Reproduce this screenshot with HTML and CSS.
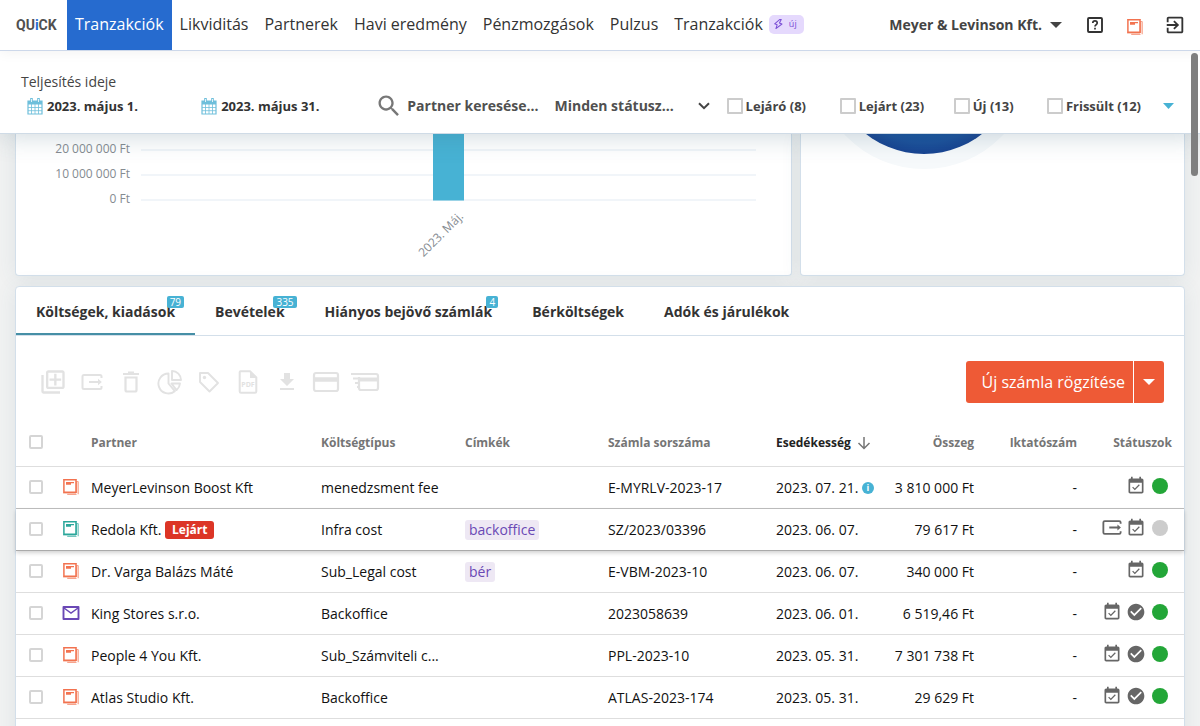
FILE: index.html
```html
<!DOCTYPE html>
<html lang="hu">
<head>
<meta charset="utf-8">
<meta name="viewport" content="width=device-width, initial-scale=1">
<title>QUiCK – Tranzakciók</title>
<link rel="stylesheet" href="styles.css">
</head>
<body>
<svg class="sprite" aria-hidden="true">
  <symbol id="doc" viewBox="0 0 16 16">
    <path d="M3 13.500h10.500V2.500h2M13.500 15.300H4.200M15.200 3v12.200" fill="none" stroke="currentColor" stroke-width="1.200" opacity=".65"/>
    <path d="M.9 .8H13v12.500H.9z" fill="none" stroke="currentColor" stroke-width="1.500"/>
    <path d="M.4 13.200v1.200H13M0 .3h14" fill="none" stroke="currentColor" stroke-width=".8" opacity=".5"/>
    <path d="M3 3.600h8M3 5h5" stroke="currentColor" stroke-width="1.300"/>
  </symbol>
  <symbol id="mail" viewBox="0 0 18 16">
    <path d="M1.500 2h15v12h-15z" fill="none" stroke="currentColor" stroke-width="1.900" stroke-linejoin="round"/>
    <path d="M2 3l7 5 7-5" fill="none" stroke="currentColor" stroke-width="1.500"/>
  </symbol>
  <symbol id="event" viewBox="0 0 24 24"><path fill="currentColor" d="M16.530 11.060L15.470 10l-4.880 4.880-2.120-2.120-1.060 1.060L10.590 17l5.940-5.940zM19 3h-1V1h-2v2H8V1H6v2H5c-1.110 0-2 .9-2 2v14c0 1.100.89 2 2 2h14c1.100 0 2-.9 2-2V5c0-1.100-.9-2-2-2zm0 16H5V8h14v11z"/></symbol>
  <symbol id="check" viewBox="0 0 24 24"><path fill="currentColor" d="M12 2C6.480 2 2 6.480 2 12s4.480 10 10 10 10-4.480 10-10S17.520 2 12 2zm-2 15l-5-5 1.410-1.410L10 14.170l7.590-7.590L19 8l-9 9z"/></symbol>
  <symbol id="dot" viewBox="0 0 24 24"><circle cx="12" cy="12" r="9.600" fill="currentColor"/></symbol>
  <symbol id="send" viewBox="0 0 22 18"><path d="M20.500 5V3.500q0-1.500-1.500-1.500H3q-1.500 0-1.500 1.500v11Q1.500 16 3 16h16q1.500 0 1.500-1.500V13M8 9h10" fill="none" stroke="currentColor" stroke-width="2"/><path d="M17 5.800L20.800 9 17 12.200z" fill="currentColor"/></symbol>
  <symbol id="calendar" viewBox="0 0 16 17"><path d="M1 3h14v13H1z" fill="#fff" stroke="currentColor" stroke-width="1.200"/><path d="M1 3h14v3.500H1z" fill="currentColor"/><path d="M4.500 6v10M8 6v10M11.500 6v10M1 9.500h14M1 12.700h14" stroke="currentColor" stroke-width=".8"/><path d="M4.500 .5v4M11.500 .5v4" stroke="currentColor" stroke-width="2.600" stroke-linecap="round"/><path d="M4.500 1v3M11.500 1v3" stroke="#fff" stroke-width=".8"/></symbol>
</svg>

<div class="app">
  <header class="topbar">
    <a class="logo" href="#">QU<span class="logo-i">i</span>CK</a>
    <nav class="nav">
      <a class="nav-link active" href="#">Tranzakciók</a>
      <a class="nav-link" href="#">Likviditás</a>
      <a class="nav-link" href="#">Partnerek</a>
      <a class="nav-link" href="#">Havi eredmény</a>
      <a class="nav-link" href="#">Pénzmozgások</a>
      <a class="nav-link" href="#">Pulzus</a>
      <a class="nav-link" href="#">Tranzakciók
        <span class="new-pill"><svg width="11" height="12" viewBox="0 0 12 12"><path d="M7.500 1L1.800 5.800l2.700 1L3.200 11l6.600-5-2.800-1L9 1z" fill="none" stroke="currentColor" stroke-width="1.100" stroke-linejoin="round"/></svg>új</span></a>
    </nav>
    <div class="account">
      <button class="company" type="button">Meyer &amp; Levinson Kft. <svg width="12" height="6" viewBox="0 0 12 6"><path d="M0 0h12L6 6z" fill="currentColor"/></svg></button>
      <button class="icon-button" type="button" aria-label="Súgó"><svg width="18" height="18" viewBox="0 0 18 18"><rect x="2" y="2" width="14" height="14" rx="1" fill="none" stroke="currentColor" stroke-width="1.900"/><path d="M6.800 7q0-2.200 2.200-2.200T11.200 7q0 1-1.100 1.700T9 10.600M9 11.700v1.700" fill="none" stroke="currentColor" stroke-width="1.700"/></svg></button>
      <button class="icon-button orange low" type="button" aria-label="Dokumentumok"><svg width="16" height="16"><use href="#doc"/></svg></button>
      <button class="icon-button" type="button" aria-label="Kilépés"><svg width="22" height="22" viewBox="0 0 24 24"><path fill="currentColor" d="M10.090 15.590L11.500 17l5-5-5-5-1.410 1.410L12.670 11H3v2h9.670l-2.580 2.590zM19 3H5c-1.110 0-2 .9-2 2v4h2V5h14v14H5v-4H3v4c0 1.100.89 2 2 2h14c1.100 0 2-.9 2-2V5c0-1.100-.9-2-2-2z"/></svg></button>
    </div>
  </header>

  <form class="filters">
    <div class="filter-title">Teljesítés ideje</div>
    <div class="filter-row">
      <button class="date" type="button"><svg width="16" height="17"><use href="#calendar"/></svg>2023. május 1.</button>
      <button class="date" type="button"><svg width="16" height="17"><use href="#calendar"/></svg>2023. május 31.</button>
      <label class="search"><svg width="28" height="28" viewBox="0 0 24 24" aria-hidden="true"><path fill="currentColor" d="M15.500 14h-.79l-.28-.27C15.410 12.590 16 11.110 16 9.500 16 5.910 13.090 3 9.500 3S3 5.910 3 9.500 5.910 16 9.500 16c1.610 0 3.090-.59 4.230-1.570l.27.28v.79l5 4.990L20.490 19l-4.990-5zm-6 0C7.010 14 5 11.990 5 9.500S7.010 5 9.500 5 14 7.010 14 9.500 11.990 14 9.500 14z"/></svg><input type="text" placeholder="Partner keresése..." aria-label="Partner keresése"></label>
      <div class="status-filter"><select aria-label="Státusz"><option>Minden státusz...</option></select><svg width="12" height="8" viewBox="0 0 12 8" aria-hidden="true"><path d="M1 1.200l5 5 5-5" fill="none" stroke="currentColor" stroke-width="2"/></svg></div>
      <label class="tick"><input type="checkbox">Lejáró (8)</label>
      <label class="tick"><input type="checkbox">Lejárt (23)</label>
      <label class="tick"><input type="checkbox">Új (13)</label>
      <label class="tick"><input type="checkbox">Frissült (12)</label>
      <button class="more" type="button" aria-label="További szűrők"><svg width="11" height="6" viewBox="0 0 11 6"><path d="M0 0h11L5.500 6z" fill="currentColor"/></svg></button>
    </div>
  </form>

  <main class="content">
    <div class="charts">
      <section class="card chart">
        <svg viewBox="0 0 775 141" role="img" aria-label="Havi összegek">
          <path d="M125 16H740M125 41H740M125 66H740" stroke="#f1f5f9" stroke-width="2"/>
          <rect x="417" y="-10" width="31" height="76.500" fill="#47b2d4"/>
          <g class="axis" text-anchor="end">
            <text x="114" y="19">20 000 000 Ft</text>
            <text x="114" y="44">10 000 000 Ft</text>
            <text x="114" y="69">0 Ft</text>
            <text transform="translate(448 83) rotate(-45)">2023. Máj.</text>
          </g>
        </svg>
      </section>
      <section class="card chart">
        <svg viewBox="0 0 383 141" role="img" aria-label="Megoszlás">
          <defs><radialGradient id="pie"><stop offset=".6" stop-color="#0e57a0"/><stop offset=".88" stop-color="#1a509b"/><stop offset="1" stop-color="#174391"/></radialGradient></defs>
          <circle cx="123" cy="-74" r="109" fill="#f6f9fb"/>
          <circle cx="123" cy="-74" r="94" fill="url(#pie)"/>
        </svg>
      </section>
    </div>

    <section class="card list">
      <div class="tabs" role="tablist">
        <button class="tab selected" type="button" role="tab"><span class="tab-text">Költségek, kiadások<span class="count">79</span></span></button>
        <button class="tab" type="button" role="tab"><span class="tab-text">Bevételek<span class="count wide">335</span></span></button>
        <button class="tab" type="button" role="tab"><span class="tab-text">Hiányos bejövő számlák<span class="count narrow">4</span></span></button>
        <button class="tab" type="button" role="tab">Bérköltségek</button>
        <button class="tab" type="button" role="tab">Adók és járulékok</button>
      </div>

      <div class="toolbar">
        <div class="tools">
          <button type="button" aria-label="Hozzáadás"><svg width="28" height="28" viewBox="0 0 24 24"><path fill="currentColor" d="M4 6H2v14c0 1.100.9 2 2 2h14v-2H4V6zm16-4H8c-1.100 0-2 .9-2 2v12c0 1.100.9 2 2 2h12c1.100 0 2-.9 2-2V4c0-1.100-.9-2-2-2zm0 14H8V4h12v12zm-7-1h2v-4h4V9h-4V5h-2v4H9v2h4v4z"/></svg></button>
          <button type="button" aria-label="Küldés"><svg width="22" height="18"><use href="#send"/></svg></button>
          <button type="button" aria-label="Törlés"><svg width="18" height="24" viewBox="0 0 18 24"><path d="M3.500 7.500h11V20q0 1.500-1.500 1.500H5Q3.500 21.500 3.500 20z" fill="none" stroke="currentColor" stroke-width="2.200"/><path d="M1 4h16M6 2.500h6" stroke="currentColor" stroke-width="2"/></svg></button>
          <button type="button" aria-label="Felosztás"><svg width="26" height="26" viewBox="0 0 26 26"><path d="M11.500 4.500A10 10 0 1 0 17.800 22.200L11.500 14.500zM15 2v9h9A9 9 0 0 0 15 2zM14.500 14.500h8.500a10 10 0 0 1-3.400 6.600z" fill="none" stroke="currentColor" stroke-width="1.900" stroke-linejoin="round"/></svg></button>
          <button type="button" aria-label="Címke"><svg width="22" height="22" viewBox="0 0 22 22"><path d="M2 2h8l10 10-8.500 8.500L2 11z" fill="none" stroke="currentColor" stroke-width="1.900" stroke-linejoin="round"/><circle cx="6.500" cy="6.500" r="1.700" fill="currentColor"/></svg></button>
          <button type="button" aria-label="PDF"><svg width="20" height="24" viewBox="0 0 20 24"><path d="M2.500 1.200H12l6.300 6.300v14q0 1.300-1.300 1.300H3q-1.300 0-1.300-1.300V2q0-.8.800-.8z" fill="none" stroke="currentColor" stroke-width="2"/><path d="M12 1v7h7z" fill="currentColor"/><text x="10" y="17" class="pdf" text-anchor="middle">PDF</text></svg></button>
          <button type="button" aria-label="Letöltés"><svg width="24" height="24" viewBox="0 0 24 24"><path fill="currentColor" d="M5 20h14v-2H5v2zM19 9h-4V3H9v6H5l7 7 7-7z"/></svg></button>
          <button type="button" aria-label="Kártya"><svg width="28" height="22" viewBox="0 0 28 22"><rect x="2" y="2" width="24" height="18" rx="2" fill="none" stroke="currentColor" stroke-width="2.200"/><path d="M2 8.500h24" stroke="currentColor" stroke-width="4.500"/></svg></button>
          <button type="button" aria-label="Gyors fizetés"><svg width="30" height="22" viewBox="0 0 30 22"><path d="M8 3h18q2 0 2 2v12q0 2-2 2H11q-2 0-2-2V6" fill="none" stroke="currentColor" stroke-width="2.200"/><path d="M8 8.500h20" stroke="currentColor" stroke-width="4"/><path d="M1 3h9M3 7.500h7M5 12h4M7 16h3" stroke="currentColor" stroke-width="2"/></svg></button>
        </div>
        <div class="split-button">
          <button class="primary" type="button">Új számla rögzítése</button>
          <button class="primary-more" type="button" aria-label="További lehetőségek"><svg width="12" height="6" viewBox="0 0 12 6"><path d="M0 0h12L6 6z" fill="currentColor"/></svg></button>
        </div>
      </div>

      <table class="invoices">
        <colgroup><col class="c-check"><col class="c-icon"><col><col class="c-type"><col class="c-tags"><col class="c-number"><col class="c-due"><col class="c-amount"><col class="c-file"><col class="c-status"></colgroup>
        <thead>
          <tr><th class="check"><input type="checkbox" aria-label="Összes kijelölése"></th><th></th><th>Partner</th><th>Költségtípus</th><th>Címkék</th><th>Számla sorszáma</th><th class="sorted">Esedékesség <svg width="14" height="14" viewBox="0 0 14 14"><path d="M7 1v11.500M1.500 7L7 12.500 12.500 7" fill="none" stroke="#757575" stroke-width="1.500"/></svg></th><th class="right">Összeg</th><th class="right">Iktatószám</th><th class="status">Státuszok</th></tr>
        </thead>
        <tbody>
          <tr><td class="check"><input type="checkbox" aria-label="MeyerLevinson Boost Kft"></td><td class="source orange"><svg width="16" height="16"><use href="#doc"/></svg></td><td>MeyerLevinson Boost Kft</td><td>menedzsment fee</td><td></td><td>E-MYRLV-2023-17</td><td>2023. 07. 21. <span class="info">i</span></td><td class="right">3 810 000 Ft</td><td class="right">-</td><td class="status"><div class="marks"><svg><use href="#event"/></svg><svg class="green"><use href="#dot"/></svg></div></td></tr>
          <tr class="hovered"><td class="check"><input type="checkbox" aria-label="Redola Kft."></td><td class="source teal"><svg width="16" height="16"><use href="#doc"/></svg></td><td>Redola Kft. <span class="overdue">Lejárt</span></td><td>Infra cost</td><td><span class="tag">backoffice</span></td><td>SZ/2023/03396</td><td>2023. 06. 07.</td><td class="right">79 617 Ft</td><td class="right">-</td><td class="status"><div class="marks"><svg class="send"><use href="#send"/></svg><svg><use href="#event"/></svg><svg class="gray"><use href="#dot"/></svg></div></td></tr>
          <tr><td class="check"><input type="checkbox" aria-label="Dr. Varga Balázs Máté"></td><td class="source orange"><svg width="16" height="16"><use href="#doc"/></svg></td><td>Dr. Varga Balázs Máté</td><td>Sub_Legal cost</td><td><span class="tag">bér</span></td><td>E-VBM-2023-10</td><td>2023. 06. 07.</td><td class="right">340 000 Ft</td><td class="right">-</td><td class="status"><div class="marks"><svg><use href="#event"/></svg><svg class="green"><use href="#dot"/></svg></div></td></tr>
          <tr><td class="check"><input type="checkbox" aria-label="King Stores s.r.o."></td><td class="source violet"><svg width="18" height="16"><use href="#mail"/></svg></td><td>King Stores s.r.o.</td><td>Backoffice</td><td></td><td>2023058639</td><td>2023. 06. 01.</td><td class="right">6 519,46 Ft</td><td class="right">-</td><td class="status"><div class="marks"><svg><use href="#event"/></svg><svg><use href="#check"/></svg><svg class="green"><use href="#dot"/></svg></div></td></tr>
          <tr><td class="check"><input type="checkbox" aria-label="People 4 You Kft."></td><td class="source orange"><svg width="16" height="16"><use href="#doc"/></svg></td><td>People 4 You Kft.</td><td>Sub_Számviteli c...</td><td></td><td>PPL-2023-10</td><td>2023. 05. 31.</td><td class="right">7 301 738 Ft</td><td class="right">-</td><td class="status"><div class="marks"><svg><use href="#event"/></svg><svg><use href="#check"/></svg><svg class="green"><use href="#dot"/></svg></div></td></tr>
          <tr><td class="check"><input type="checkbox" aria-label="Atlas Studio Kft."></td><td class="source orange"><svg width="16" height="16"><use href="#doc"/></svg></td><td>Atlas Studio Kft.</td><td>Backoffice</td><td></td><td>ATLAS-2023-174</td><td>2023. 05. 31.</td><td class="right">29 629 Ft</td><td class="right">-</td><td class="status"><div class="marks"><svg><use href="#event"/></svg><svg><use href="#check"/></svg><svg class="green"><use href="#dot"/></svg></div></td></tr>
        </tbody>
      </table>
    </section>
  </main>
  <div class="scroll-thumb"></div>
</div>
</body>
</html>
```

FILE: styles.css
```css
* { box-sizing: border-box; }

body {
  margin: 0;
  background: #f1f2f2;
  color: #333;
  font: 14px/20px "Open Sans", "Noto Sans", sans-serif;
}

button, input, select { font: inherit; color: inherit; }
button { padding: 0; border: 0; background: none; cursor: pointer; }
a { color: inherit; text-decoration: none; }
svg { flex: none; }
.sprite { position: absolute; width: 0; height: 0; }

.app {
  position: relative;
  display: flex;
  flex-direction: column;
  height: 100vh;
  overflow: hidden;
}

/* Top bar */
.topbar {
  position: relative;
  z-index: 3;
  display: flex;
  align-items: stretch;
  flex: none;
  border-bottom: 1px solid #cdd8ea;
  background: #fff;
  box-shadow: 0 2px 12px rgba(0, 0, 0, .05);
}
.logo {
  display: flex;
  align-items: center;
  width: 67px;
  padding-left: 16px;
  color: #505050;
  font: bold 14px/20px Roboto, "Liberation Sans", sans-serif;
}
.logo-i { color: #266bcf; }
.nav { display: flex; }
.nav-link {
  display: flex;
  align-items: center;
  gap: 6px;
  padding: 12px 8px 14px;
  font-size: 16px;
  line-height: 24px;
  white-space: nowrap;
}
.nav-link.active { background: #266bcf; color: #fff; }
.new-pill {
  display: flex;
  align-items: center;
  gap: 5px;
  height: 19px;
  padding: 0 7px 0 4px;
  border-radius: 5px;
  background: #e5d9fd;
  color: #7b4fd6;
  font-size: 9px;
}
.account { display: flex; align-items: center; margin-left: auto; padding-right: 5px; }
.company {
  display: flex;
  align-items: center;
  gap: 8px;
  margin-right: 13px;
  color: #444;
  font-weight: 700;
  white-space: nowrap;
}
.icon-button { display: flex; align-items: center; justify-content: center; width: 40px; height: 40px; color: #333; }
.icon-button.orange, .orange { color: #f27350; }
.teal { color: #2ba79b; }
.violet { color: #6a48b5; }
.low { padding-top: 3px; }

/* Filters */
.filters {
  position: relative;
  z-index: 2;
  flex: none;
  padding: 21px 25px 16px 21px;
  border-bottom: 1px solid #cfdbe6;
  background: #fff;
  box-shadow: 0 2px 24px rgba(60, 100, 120, .25);
}
.filter-title { color: #444; }
.filter-row {
  display: grid;
  grid-template-columns: 180fr 177fr 176fr 172fr 113fr 114fr 93fr 116fr 12fr;
  align-items: center;
  height: 25px;
  color: #444;
  font-weight: 700;
  white-space: nowrap;
}
.filter-row > * { min-width: 0; }
.date { display: flex; align-items: center; gap: 4px; font-size: 13px; color: #333; }
.date:first-child { padding-left: 6px; }
.date svg { color: #6ebfdb; }
.search { display: flex; align-items: center; gap: 4px; margin-left: -3px; }
.search svg { color: #777; }
.search input { flex: 1; min-width: 0; padding: 0; border: 0; background: none; outline: 0; }
.search input::placeholder { color: #505050; opacity: 1; }
.status-filter { display: flex; align-items: center; padding-right: 17px; }
.status-filter select { flex: 1; min-width: 0; padding: 0; border: 0; background: none; appearance: none; color: #505050; }
.tick { display: flex; align-items: center; gap: 3px; font-size: 13px; }
input[type="checkbox"] {
  flex: none;
  width: 14px;
  height: 14px;
  margin: 0;
  border: 2px solid #d5d5d5;
  border-radius: 2px;
  background: #fff;
  appearance: none;
}
.tick input[type="checkbox"] { width: 16px; height: 16px; border-color: #ccc; border-radius: 1px; }
.more { color: #47b2d4; line-height: 6px; }
.more svg { display: block; }

/* Content */
.content {
  display: flex;
  flex: 1;
  flex-direction: column;
  gap: 10px;
  min-height: 0;
  padding: 0 15px;
  overflow: hidden;
}
.card {
  border: 1px solid #d3dfea;
  border-radius: 4px;
  background: #fff;
  box-shadow: 0 2px 20px rgba(60, 100, 120, .1);
}
.charts { display: grid; flex: none; grid-template-columns: 777fr 385fr; gap: 8px; }
.chart { border-top: 0; border-radius: 0 0 4px 4px; overflow: hidden; }
.chart svg { display: block; width: 100%; }
.axis { fill: #858b91; font-size: 12px; }

.list { flex: none; padding-bottom: 40px; }
.tabs { display: flex; border-bottom: 1px solid #d3dfea; }
.tab { padding: 15px 20px 11px; border-bottom: 2px solid transparent; font-weight: 700; white-space: nowrap; }
.tab.selected { border-color: #468fa6; }
.tab-text { position: relative; }
.count {
  position: absolute;
  top: -6px;
  right: -9px;
  padding: 0 3px;
  border-radius: 2px;
  background: #47b2d4;
  color: #fff;
  font-size: 10px;
  font-weight: 400;
  line-height: 12px;
}
.count.wide { right: -12px; }
.count.narrow { right: -6px; }

.toolbar { display: flex; align-items: center; justify-content: space-between; padding: 25px 20px 15px 17px; }
.tools { display: flex; color: #e2e2e2; }
.tools button { display: flex; align-items: center; justify-content: center; width: 39px; height: 32px; }
.pdf { fill: currentColor; font-size: 7px; font-weight: 700; }
.split-button { display: flex; gap: 1px; color: #fff; }
.split-button button { height: 42px; background: #ee5a36; }
.split-button .primary { padding: 0 8px 0 16px; border-radius: 3px 0 0 3px; font-size: 16px; white-space: nowrap; }
.split-button .primary-more { width: 30px; border-radius: 0 3px 3px 0; }
.primary-more svg { display: block; margin: 0 auto; }

/* Invoices */
.invoices { width: 100%; border-collapse: separate; border-spacing: 0; table-layout: fixed; color: #111; }
.c-check { width: 38px; }
.c-icon { width: 29px; }
.c-type { width: 144px; }
.c-tags { width: 143px; }
.c-number { width: 168px; }
.c-due { width: 116px; }
.c-amount { width: 98px; }
.c-file { width: 103px; }
.c-status { width: 99px; }
.invoices th, .invoices td {
  height: 42px;
  padding: 0 8px;
  border-bottom: 1px solid #dedede;
  text-align: left;
  vertical-align: middle;
  white-space: nowrap;
}
.invoices th { height: 49px; padding-top: 2px; color: #757575; font-size: 12px; font-weight: 700; }
.invoices th.sorted { color: #222; }
.sorted svg { margin-left: 3px; vertical-align: -3px; }
.invoices .right { text-align: right; }
.invoices .check { padding: 0 0 0 13px; }
.invoices td.check { padding-bottom: 2px; }
.check input { display: block; }
.invoices .source { padding: 0 0 2px 9px; }
.source svg { display: block; }
.invoices .source.violet { padding-left: 8px; }
.invoices .status { padding: 0 12px 0 0; text-align: right; }
.invoices th.status { padding-top: 2px; }
.marks { display: flex; align-items: center; justify-content: flex-end; gap: 4px; padding: 0 2px 4px 0; color: #666; }
.marks svg { width: 20px; height: 20px; }
.marks .send { height: 17px; }
.marks .green { color: #23a638; }
.marks .gray { color: #ccc; }
.hovered { position: relative; box-shadow: 0 -1px 0 #bbb, 0 2px 4px rgba(0, 0, 0, .18); }
.invoices .hovered td { border-bottom-color: #aaa; }
.overdue {
  display: inline-block;
  padding: 0 7px;
  border-radius: 3px;
  background: #dc3526;
  color: #fff;
  font-size: 12px;
  font-weight: 700;
  line-height: 18px;
  vertical-align: 1px;
}
.tag { display: inline-block; padding: 0 4px; border-radius: 3px; background: #eee8f4; color: #6a48b5; }
.info {
  display: inline-block;
  width: 12px;
  border-radius: 50%;
  background: #47b2d4;
  color: #fff;
  font-size: 9px;
  font-weight: 700;
  line-height: 12px;
  text-align: center;
  vertical-align: 2px;
}

.scroll-thumb {
  position: absolute;
  z-index: 4;
  top: 53px;
  right: 2px;
  width: 7px;
  height: 123px;
  border-radius: 4px;
  background: #7f7f7f;
}
```
